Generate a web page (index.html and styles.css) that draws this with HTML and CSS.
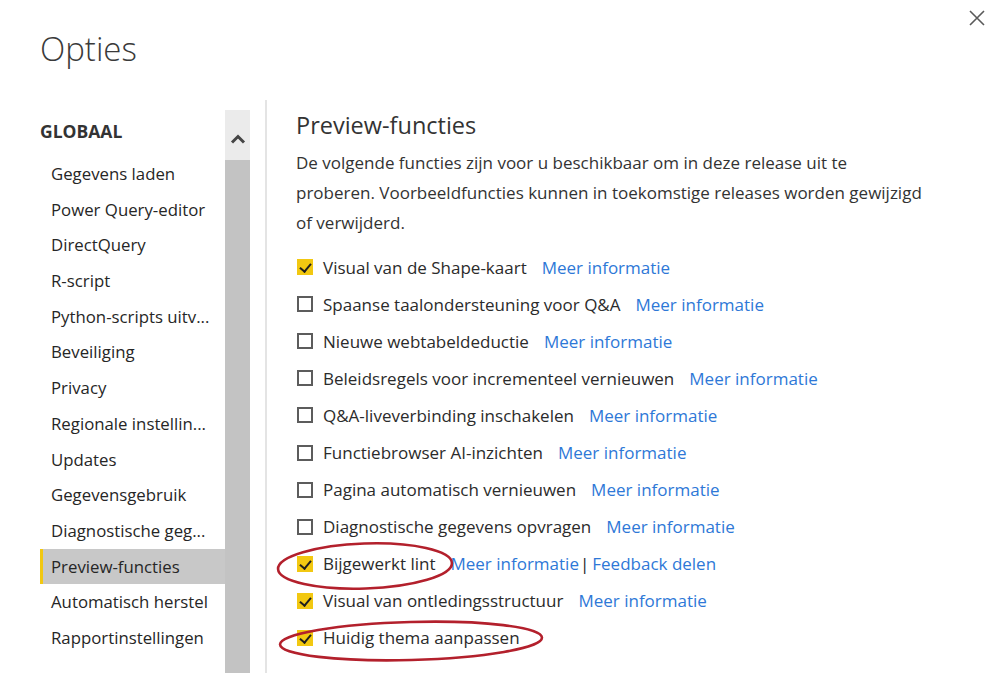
FILE: index.html
```html
<!DOCTYPE html>
<html lang="nl">
<head>
<meta charset="utf-8">
<title>Opties</title>
<link rel="stylesheet" href="styles.css">
</head>
<body>
<div class="dialog">
  <header class="head">
    <h1 class="title">Opties</h1>
    <button class="close" aria-label="Sluiten">
      <svg width="16" height="16" viewBox="0 0 16 16"><path d="M1 1 L15 15 M15 1 L1 15" stroke="#5a5a5a" stroke-width="1.6" fill="none"/></svg>
    </button>
  </header>
  <div class="body">
    <aside class="side">
      <nav class="nav">
        <div class="group">GLOBAAL</div>
        <div class="item">Gegevens laden</div>
        <div class="item">Power Query-editor</div>
        <div class="item">DirectQuery</div>
        <div class="item">R-script</div>
        <div class="item">Python-scripts uitv...</div>
        <div class="item">Beveiliging</div>
        <div class="item">Privacy</div>
        <div class="item">Regionale instellin...</div>
        <div class="item">Updates</div>
        <div class="item">Gegevensgebruik</div>
        <div class="item">Diagnostische geg...</div>
        <div class="item active">Preview-functies</div>
        <div class="item">Automatisch herstel</div>
        <div class="item">Rapportinstellingen</div>
      </nav>
      <div class="scroll">
        <div class="scroll-up">
          <svg width="16" height="10" viewBox="0 0 16 10"><path d="M2 8.5 L8 2.5 L14 8.5" stroke="#454545" stroke-width="3" fill="none"/></svg>
        </div>
        <div class="scroll-thumb"></div>
      </div>
    </aside>
    <div class="divider"></div>
    <main class="content">
      <h2 class="heading">Preview-functies</h2>
      <p class="desc">De volgende functies zijn voor u beschikbaar om in deze release uit te<br>proberen. Voorbeeldfuncties kunnen in toekomstige releases worden gewijzigd<br>of verwijderd.</p>
      <ul class="opts">
        <li class="opt"><span class="cb on"></span><span class="lbl">Visual van de Shape-kaart</span><a class="link">Meer informatie</a></li>
        <li class="opt"><span class="cb"></span><span class="lbl">Spaanse taalondersteuning voor Q&amp;A</span><a class="link">Meer informatie</a></li>
        <li class="opt"><span class="cb"></span><span class="lbl">Nieuwe webtabeldeductie</span><a class="link">Meer informatie</a></li>
        <li class="opt"><span class="cb"></span><span class="lbl">Beleidsregels voor incrementeel vernieuwen</span><a class="link">Meer informatie</a></li>
        <li class="opt"><span class="cb"></span><span class="lbl">Q&amp;A-liveverbinding inschakelen</span><a class="link">Meer informatie</a></li>
        <li class="opt"><span class="cb"></span><span class="lbl">Functiebrowser AI-inzichten</span><a class="link">Meer informatie</a></li>
        <li class="opt"><span class="cb"></span><span class="lbl">Pagina automatisch vernieuwen</span><a class="link">Meer informatie</a></li>
        <li class="opt"><span class="cb"></span><span class="lbl">Diagnostische gegevens opvragen</span><a class="link">Meer informatie</a></li>
        <li class="opt"><span class="cb on"></span><span class="lbl">Bijgewerkt lint</span><a class="link">Meer informatie</a><span class="sep">|</span><a class="link near">Feedback delen</a></li>
        <li class="opt"><span class="cb on"></span><span class="lbl">Visual van ontledingsstructuur</span><a class="link">Meer informatie</a></li>
        <li class="opt"><span class="cb on"></span><span class="lbl">Huidig thema aanpassen</span></li>
      </ul>
    </main>
  </div>
  <svg class="marks" width="1000" height="673" viewBox="0 0 1000 673">
    <ellipse cx="365" cy="566" rx="87" ry="22.5" transform="rotate(-2 365 566)" fill="none" stroke="#b3202c" stroke-width="2.6"/>
    <ellipse cx="411" cy="641" rx="131" ry="19" transform="rotate(-1.5 411 641)" fill="none" stroke="#b3202c" stroke-width="2.6"/>
  </svg>
</div>
</body>
</html>
```

FILE: styles.css
```css
* { box-sizing: border-box; }
html, body { margin: 0; padding: 0; background: #fff; }
body {
  width: 1000px;
  height: 673px;
  overflow: hidden;
  font-family: "Open Sans", "Noto Sans", sans-serif;
  color: #262626;
}
.dialog { position: relative; width: 1000px; height: 673px; }
.head {
  display: flex;
  justify-content: space-between;
  align-items: flex-start;
  height: 100px;
}
.title {
  margin: 0;
  padding: 27px 0 0 40px;
  font-size: 33px;
  font-weight: 300;
  line-height: 44px;
  color: #3a3a3a;
}
.close {
  border: 0;
  background: none;
  padding: 0;
  margin: 10px 15px 0 0;
  width: 16px;
  height: 16px;
  display: flex;
}
.body {
  display: flex;
  height: 573px;
}
.side {
  display: flex;
  margin-left: 40px;
  width: 210px;
  padding-top: 10px;
}
.nav { width: 185px; }
.group {
  font-weight: 700;
  font-size: 17.5px;
  line-height: 24px;
  margin: 9px 0 13px 0;
  color: #333;
}
.item {
  height: 35.7px;
  line-height: 35.7px;
  padding-left: 8px;
  font-size: 16.8px;
  white-space: nowrap;
  border-left: 3px solid transparent;
}
.item.active {
  background: #c8c8c8;
  border-left-color: #f2c811;
}
.scroll {
  width: 25px;
  display: flex;
  flex-direction: column;
}
.scroll-up {
  height: 50px;
  background: #ebebeb;
  display: flex;
  justify-content: center;
  align-items: center;
  padding-top: 8px;
}
.scroll-thumb {
  flex: 1;
  background: #c3c3c3;
}
.divider {
  width: 2px;
  background: #e4e4e4;
  margin-left: 15px;
}
.content {
  padding: 10px 0 0 29px;
  flex: 1;
}
.heading {
  margin: 0 0 8px 0;
  font-size: 23.5px;
  font-weight: 400;
  line-height: 30px;
  color: #333;
}
.desc {
  margin: 0 0 10.5px 0;
  font-size: 17px;
  line-height: 30px;
  color: #333;
  white-space: nowrap;
}
.opts { list-style: none; margin: 0; padding: 0; }
.opt {
  display: flex;
  align-items: center;
  height: 37.1px;
  font-size: 17px;
  white-space: nowrap;
}
.cb {
  width: 16px;
  height: 16px;
  margin-left: 1px;
  border: 2px solid #5c5c5c;
  background: #fff;
  flex: none;
  position: relative;
}
.cb.on {
  background: #f2c811;
  border-color: #f2c811;
}
.cb.on::after {
  content: "";
  position: absolute;
  left: 3px;
  top: 0px;
  width: 5px;
  height: 9px;
  border-right: 2px solid #1e1e1e;
  border-bottom: 2px solid #1e1e1e;
  transform: rotate(40deg);
}
.lbl { margin-left: 10px; color: #2b2b2b; }
.link {
  margin-left: 15px;
  color: #2e78d7;
  text-decoration: none;
}
.link.near { margin-left: 3px; }
.sep { margin-left: 1px; color: #222; }
.marks {
  position: absolute;
  left: 0;
  top: 0;
  pointer-events: none;
}
```
